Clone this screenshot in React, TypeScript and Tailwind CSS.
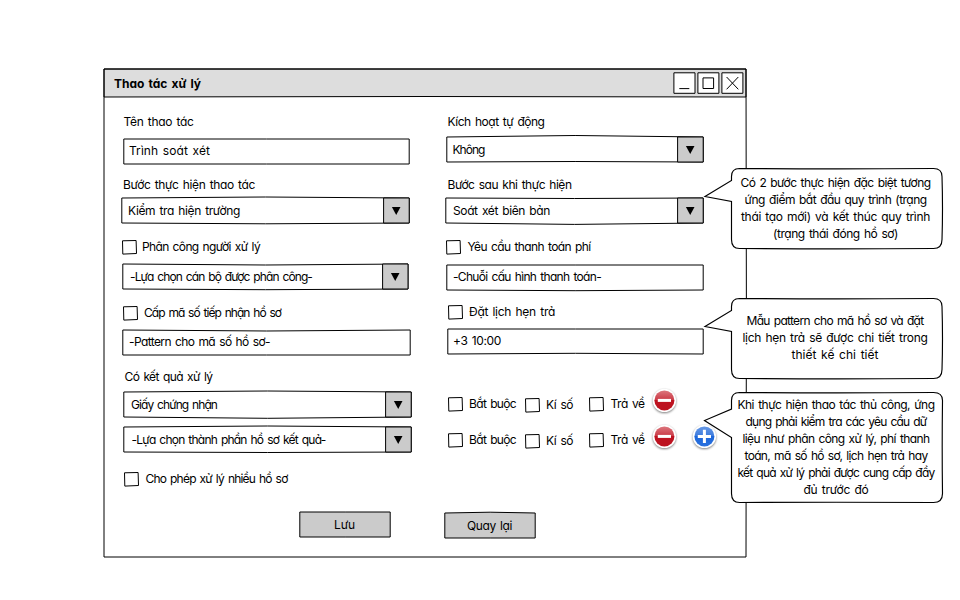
import { useLayoutEffect, useRef, useState } from "react";

/* One line of lettering, tracked so that it fills the width of its box. */
function T({ className, children }: { className: string; children: string }) {
  const box = useRef<HTMLDivElement>(null);
  const ink = useRef<HTMLSpanElement>(null);
  const [track, setTrack] = useState(0);
  useLayoutEffect(() => {
    if (!box.current || !ink.current) return;
    const gap = box.current.clientWidth - ink.current.getBoundingClientRect().width;
    setTrack(gap / children.length);
  }, [children]);
  return (
    <div ref={box} className={`h-4 shrink-0 whitespace-nowrap leading-4 [word-spacing:1.3px] ${className}`}>
      <span ref={ink} className="inline-block" style={{ letterSpacing: `${track}px` }}>
        {children}
      </span>
    </div>
  );
}

type BoxProps = { w: number; h?: number; top?: number; bottom?: number; split?: number; fill?: string };

/* Hand-drawn rectangle outline with slightly bowed top and bottom edges. */
function Outline({ w, h = 25, top = 0, bottom = 0, split, fill = "#fff" }: BoxProps) {
  return (
    <svg className="absolute left-0 top-0 overflow-visible" width={w} height={h} fill="none" stroke="#000">
      <path d={`M-.2 0Q${w / 2} ${top * 2} ${w - 0.3} 0V${h}Q${w / 2} ${h + bottom * 2} -.2 ${h}Z`} fill={fill} />
      {split !== undefined && (
        <>
          <path d={`M${split - 0.4} 0H${w - 0.3}V${h}H${split - 0.4}Z`} fill="#cbcbcb" />
          <path d={`M${split + 7.9} 9h8.6l-4.3 8Z`} fill="#000" stroke="none" />
        </>
      )}
    </svg>
  );
}

function Field({ className, text, textClass, ...box }: BoxProps & { className: string; text: string; textClass: string }) {
  return (
    <div className={`relative h-[25px] shrink-0 ${className}`}>
      <Outline {...box} />
      <T className={`relative ${textClass}`}>{text}</T>
    </div>
  );
}

function Check({ className, text, textClass, boxClass = "mt-px" }: { className: string; text: string; textClass: string; boxClass?: string }) {
  return (
    <div className={`flex h-4 shrink-0 items-start ${className}`}>
      <svg className={`h-[14px] w-[14px] shrink-0 overflow-visible ${boxClass}`} fill="#fff" stroke="#000">
        <path d="M.5 .8L14.1 .5L14.5 13.5L.8 14.1Z" />
      </svg>
      <T className={textClass}>{text}</T>
    </div>
  );
}

function Round({ className, plus = false }: { className: string; plus?: boolean }) {
  const id = plus ? "blue" : "red";
  return (
    <svg className={`h-[28px] w-[28px] shrink-0 overflow-visible ${className}`} viewBox="-14.4 -14.4 28 28">
      <defs>
        <linearGradient id={id} x1="0" y1="0" x2="0" y2="1">
          <stop offset="0" stopColor={plus ? "#6698e5" : "#dc777e"} />
          <stop offset=".49" stopColor={plus ? "#3b7ade" : "#ca3844"} />
          <stop offset=".5" stopColor={plus ? "#1d66d9" : "#bd1320"} />
          <stop offset="1" stopColor={plus ? "#2b72df" : "#bd1320"} />
        </linearGradient>
        <filter id={`${id}-shade`} x="-30%" y="-30%" width="160%" height="170%">
          <feGaussianBlur stdDeviation="1" />
        </filter>
      </defs>
      <circle cy="1" r="11.7" fill="#000" opacity=".5" filter={`url(#${id}-shade)`} />
      <circle r="11.7" fill="#fff" />
      <circle r="10" fill={`url(#${id})`} />
      <path d={plus ? "M-6.6 0H6.6M0 -6.6V6.6" : "M-6.6 0H6.6"} stroke="#fff" strokeWidth="3" />
    </svg>
  );
}

function Callout({ className, path, pad, lines }: { className: string; path: string; pad: string; lines: [string, string][] }) {
  return (
    <div className={`absolute w-[211px] ${className}`}>
      <svg className="absolute left-0 top-0 h-full w-full overflow-visible" fill="#fff" stroke="#000" strokeWidth="1.15">
        <path d={path} transform="translate(.5 .5)" />
      </svg>
      <div className={`relative flex flex-col items-center gap-px ${pad}`}>
        {lines.map(([text, width]) => (
          <T key={text} className={width}>{text}</T>
        ))}
      </div>
    </div>
  );
}

function ResultOptions({ className, plus = false }: { className: string; plus?: boolean }) {
  return (
    <div className={`flex h-4 shrink-0 items-start ${className}`}>
      <Check className="w-[77px]" text="Bắt buộc" textClass="ml-[7px] w-[47px]" />
      <Check className="w-[64px]" text="Kí số" textClass="ml-[7px] mt-px w-[27px]" boxClass="mt-[2px]" />
      <Check className="w-[61px]" text="Trả về" textClass="ml-[7.5px] w-[34px]" />
      <Round className="-mt-[10px]" />
      {plus && <Round plus className="-mt-[10px] ml-[12px]" />}
    </div>
  );
}

export default function App() {
  return (
    <div className="relative h-[600px] w-[960px] overflow-hidden bg-white pl-[104px] pt-[69px] font-['Inter','Noto_Sans',sans-serif] text-[12px] text-black [font-feature-settings:'cv11']">
      <div className="relative flex h-[488px] w-[642px] flex-col">
        <svg className="absolute left-0 top-0 h-full w-full overflow-visible" fill="none" stroke="#000">
          <path d="M0 0H642V28L320 27.5L0 28Z" fill="#ddd" />
          <path d="M0 0H642Q642.8 244 642 488H0Z" />
        </svg>
        <header className="relative flex h-7 shrink-0 items-start">
          <T className="ml-[10px] mt-[7px] w-[87px] font-bold">Thao tác xử lý</T>
          <svg className="ml-auto mr-[3px] mt-[3px] h-[23px] w-[70px] overflow-visible" fill="#fff" stroke="#000">
            <path d="M.9 .8H22V21.3H.9ZM24.9 .8H45.9V21.3H24.9ZM48.9 .8H69.9V21.3H48.9Z" />
            <path d="M6.3 16.6H16.3M30 5.9H40.6V16.5H30ZM53.6 5L65.3 17.3M65.3 5L53.6 17.3" />
          </svg>
        </header>
        <div className="relative flex h-[390px] shrink-0">
          <div className="flex w-[342px] flex-col">
            <T className="ml-[19.5px] mt-[17px] w-[70px]">Tên thao tác</T>
            <Field className="ml-5 mt-[9px]" w={285.5} text="Trình soát xét" textClass="left-[5px] top-[4px] w-[81px]" />
            <T className="ml-[19px] mt-[13px] w-[132px]">Bước thực hiện thao tác</T>
            <Field className="ml-[18px] mt-[5px]" w={287.5} top={-1} bottom={0.8} split={262} text="Kiểm tra hiện trường" textClass="left-[6px] top-[5px] w-[112px]" />
            <Check className="ml-[18px] mt-4" text="Phân công người xử lý" textClass="ml-[6px] w-[118px]" />
            <Field className="ml-[19px] mt-[9px]" w={285.3} top={1} bottom={0.7} split={260} text="-Lựa chọn cán bộ được phân công-" textClass="left-[7px] top-[5px] w-[182px]" />
            <Check className="ml-[19px] mt-4" text="Cấp mã số tiếp nhận hồ sơ" textClass="ml-[7px] w-[137px]" />
            <Field className="ml-[19px] mt-[9px]" w={287.5} top={1} text="-Pattern cho mã số hồ sơ-" textClass="left-[6px] top-[4px] w-[141px]" />
            <T className="ml-[20.5px] mt-[14px] w-[88px]">Có kết quả xử lý</T>
            <Field className="ml-5 mt-[7px]" w={287.5} top={-1} bottom={1.3} split={262} text="Giấy chứng nhận" textClass="left-[7px] top-[5px] w-[86px]" />
            <Field className="ml-5 mt-[10px]" w={287.5} top={-1} bottom={0.5} split={262} text="-Lựa chọn thành phần hồ sơ kết quả-" textClass="left-[7.5px] top-[5px] w-[194px]" />
            <Check className="ml-5 mt-[19px]" text="Cho phép xử lý nhiều hồ sơ" textClass="ml-[7.5px] w-[142px]" />
          </div>
          <div className="flex w-[300px] flex-col">
            <T className="ml-[1.5px] mt-[17px] w-[97px]">Kích hoạt tự động</T>
            <Field className="ml-[1px] mt-[7px]" w={256.5} top={-1.5} bottom={-0.5} split={231} text="Không" textClass="left-[5.5px] top-[5px] w-[31.5px]" />
            <T className="ml-[1.5px] mt-[15px] w-[124px]">Bước sau khi thực hiện</T>
            <Field className="mt-[5px]" w={257.5} top={0.5} bottom={1.4} split={232} text="Soát xét biên bản" textClass="left-[7px] top-[5px] w-[97px]" />
            <Check className="mt-4" text="Yêu cầu thanh toán phí" textClass="ml-[7.5px] w-[123px]" />
            <Field className="ml-[1px] mt-[10px]" w={256.5} bottom={0.7} text="-Chuỗi cấu hình thanh toán-" textClass="left-[6px] top-[4px] w-[148px]" />
            <Check className="ml-[2px] mt-[14px]" text="Đặt lịch hẹn trả" textClass="ml-[7px] w-[86px]" />
            <Field className="ml-[2px] mt-[9px]" w={255.5} bottom={-0.7} text="+3 10:00" textClass="left-[5px] top-[4px] w-[48px]" />
            <ResultOptions className="ml-[2px] mt-[42px]" />
            <ResultOptions plus className="ml-[2px] mt-5" />
          </div>
        </div>
        <footer className="relative mt-[25px] flex">
          <div className="relative ml-[196px] h-[25px] w-[90.5px]">
            <Outline w={90.5} fill="#cbcbcb" />
            <T className="relative left-[34px] top-[5px] w-[21px]">Lưu</T>
          </div>
          <div className="relative ml-[54.5px] mt-px h-[25px] w-[90.5px]">
            <Outline w={90.5} top={-0.8} fill="#cbcbcb" />
            <T className="relative left-[22px] top-[5px] w-[45px]">Quay lại</T>
          </div>
        </footer>
      </div>

      <Callout
        className="left-[731px] top-[168px] h-[80px]"
        path="M8 0Q105 .8 202 0Q210.5 0 210.5 8Q211.5 40 210.5 71Q210.5 80 202 80Q105 80.8 8 80Q0 80 0 71V33L-26.5 28L0 12V8Q0 0 8 0Z"
        pad="mt-[7px] ml-[-2px]"
        lines={[
          ["Có 2 bước thực hiện đặc biệt tương", "w-[190px]"],
          ["ứng điểm bắt đầu quy trình (trạng", "w-[182px]"],
          ["thái tạo mới) và kết thúc quy trình", "w-[189px]"],
          ["(trạng thái đóng hồ sơ)", "w-[125px]"],
        ]}
      />
      <Callout
        className="left-[731px] top-[298px] h-[80px]"
        path="M8 0Q105 .8 202 0Q210.5 0 210.5 8Q211.5 40 210.5 71Q210.5 80 202 80Q105 80.8 8 80Q0 80 0 71V33L-26.5 28L0 12V8Q0 0 8 0Z"
        pad="mt-[15px] ml-[-3px]"
        lines={[
          ["Mẫu pattern cho mã hồ sơ và đặt", "w-[177px]"],
          ["lịch hẹn trả sẽ được chi tiết trong", "w-[185px]"],
          ["thiết kế chi tiết", "w-[87px]"],
        ]}
      />
      <Callout
        className="left-[731px] top-[392px] h-[110px]"
        path="M8 0Q105 .6 202 0Q211 0 211 8Q210.4 55 211 101Q211 110 202 110Q105 109.4 8 110Q0 110 0 101V45L-27 28L0 16.5V8Q0 0 8 0Z"
        pad="mt-[5px] ml-[-1px]"
        lines={[
          ["Khi thực hiện thao tác thủ công, ứng", "w-[197px]"],
          ["dụng phải kiểm tra các yêu cầu dữ", "w-[181px]"],
          ["liệu như phân công xử lý, phí thanh", "w-[187px]"],
          ["toán, mã số hồ sơ, lịch hẹn trả hay", "w-[183px]"],
          ["kết quả xử lý phải được cung cấp đầy", "w-[197px]"],
          ["đủ trước đó", "w-[65px]"],
        ]}
      />
    </div>
  );
}
